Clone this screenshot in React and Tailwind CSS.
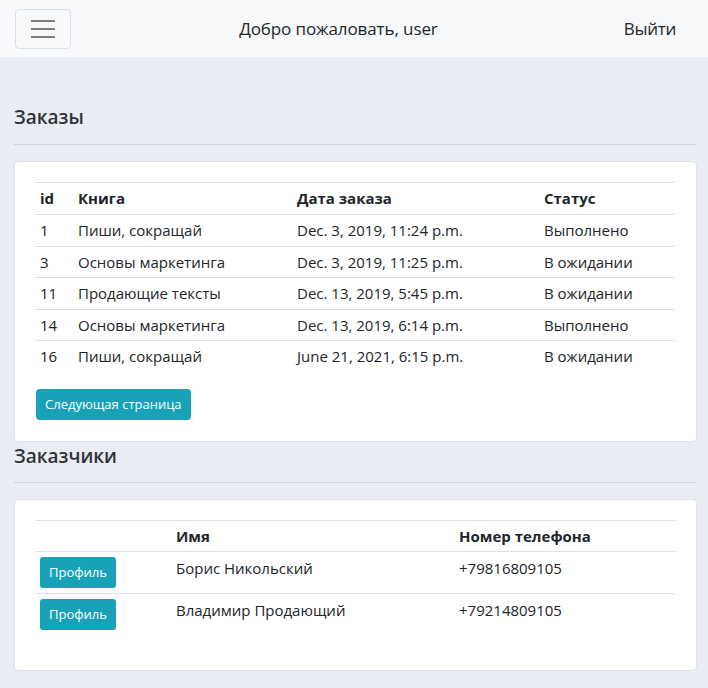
export default function App() {
  const orders = [
    ["1", "Пиши, сокращай", "Dec. 3, 2019, 11:24 p.m.", "Выполнено"],
    ["3", "Основы маркетинга", "Dec. 3, 2019, 11:25 p.m.", "В ожидании"],
    ["11", "Продающие тексты", "Dec. 13, 2019, 5:45 p.m.", "В ожидании"],
    ["14", "Основы маркетинга", "Dec. 13, 2019, 6:14 p.m.", "Выполнено"],
    ["16", "Пиши, сокращай", "June 21, 2021, 6:15 p.m.", "В ожидании"],
  ];
  const customers = [
    ["Борис Никольский", "+79816809105"],
    ["Владимир Продающий", "+79214809105"],
  ];
  return (
    <div className="min-h-[688px] bg-[#e9ecf3] text-[#212529]" style={{ fontFamily: '"Open Sans", "Noto Sans", sans-serif' }}>
      <nav className="h-[57px] bg-[#f8f9fa] flex items-center px-[15px]">
        <button className="w-[56px] h-[40px] border border-[#dcdfe3] rounded-[4px] flex flex-col items-center justify-center gap-[6px]">
          <span className="block w-[24px] h-[2px] bg-[#7f7f7f]" />
          <span className="block w-[24px] h-[2px] bg-[#7f7f7f]" />
          <span className="block w-[24px] h-[2px] bg-[#7f7f7f]" />
        </button>
        <div className="flex-1 text-center text-[17px] tracking-[-0.1px] pr-[18px]">Добро пожаловать, user</div>
        <div className="text-[17px] tracking-[-0.3px] pr-[17px]">Выйти</div>
      </nav>
      <main className="pl-[14px] pr-[11px] pt-[46px] pb-[17px]">
        <h2 className="text-[19px] font-semibold leading-[28px] text-[#303336]">Заказы</h2>
        <hr className="mt-[13px] border-t border-[#d1d4d8]" />
        <div className="mt-[16px] bg-white rounded-[4px] border border-[#dee2e6] px-[20px] pt-[20px] pb-[21px]">
          <table className="w-full table-fixed text-[15px] border-collapse">
            <colgroup>
              <col className="w-[43px]" />
              <col className="w-[219px]" />
              <col className="w-[247px]" />
              <col />
            </colgroup>
            <thead>
              <tr className="border-t border-b border-[#dee2e6] h-[32px]">
                <th className="text-left font-bold pl-[5px]">id</th>
                <th className="text-left font-bold">Книга</th>
                <th className="text-left font-bold">Дата заказа</th>
                <th className="text-left font-bold">Статус</th>
              </tr>
            </thead>
            <tbody>
              {orders.map((o, i) => (
                <tr key={i} className={`h-[31.5px] ${i < orders.length - 1 ? "border-b border-[#dee2e6]" : ""}`}>
                  <td className="pl-[5px]">{o[0]}</td>
                  <td>{o[1]}</td>
                  <td>{o[2]}</td>
                  <td>{o[3]}</td>
                </tr>
              ))}
            </tbody>
          </table>
          <button className="mt-[17px] ml-[1px] h-[31px] px-[9px] bg-[#17a2b8] text-white text-[13px] rounded-[4px]">Следующая страница</button>
        </div>
        <h2 className="text-[19px] font-semibold leading-[28px] text-[#303336]">Заказчики</h2>
        <hr className="mt-[12px] border-t border-[#d1d4d8]" />
        <div className="mt-[16px] bg-white rounded-[4px] border border-[#dee2e6] px-[20px] pt-[20px] pb-[34px]">
          <table className="w-full table-fixed text-[15px] border-collapse">
            <colgroup>
              <col className="w-[141px]" />
              <col className="w-[283px]" />
              <col />
            </colgroup>
            <thead>
              <tr className="border-t border-b border-[#dee2e6] h-[31px]">
                <th></th>
                <th className="text-left font-bold">Имя</th>
                <th className="text-left font-bold">Номер телефона</th>
              </tr>
            </thead>
            <tbody>
              {customers.map((c, i) => (
                <tr key={i} className={`h-[42px] align-top ${i < customers.length - 1 ? "border-b border-[#dee2e6]" : ""}`}>
                  <td className="pl-[5px] pt-[5px]">
                    <button className="h-[31px] w-[76px] bg-[#17a2b8] text-white text-[13px] rounded-[3px]">Профиль</button>
                  </td>
                  <td className="pt-[5px]">{c[0]}</td>
                  <td className="pt-[5px]">{c[1]}</td>
                </tr>
              ))}
            </tbody>
          </table>
        </div>
      </main>
    </div>
  );
}
